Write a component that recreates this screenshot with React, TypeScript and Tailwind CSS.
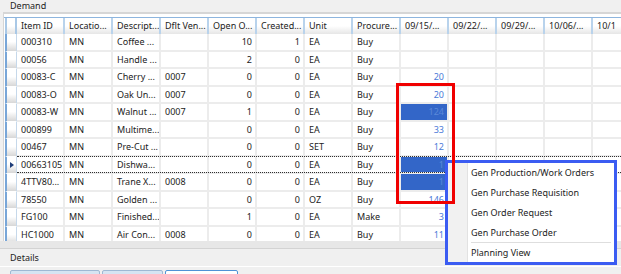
const columns = [
  "Item ID",
  "Locatio...",
  "Descript...",
  "Dflt Ven...",
  "Open O...",
  "Created...",
  "Unit",
  "Procure...",
  "09/15/...",
  "09/22/...",
  "09/29/...",
  "10/06/...",
  "10/1",
];

type Row = {
  id: string;
  desc: string;
  vendor: string;
  open: string;
  created: string;
  unit: string;
  proc: string;
  wk1: string;
  picked?: boolean;
  current?: boolean;
};

const rows: Row[] = [
  { id: "000310", desc: "Coffee ...", vendor: "", open: "10", created: "1", unit: "EA", proc: "Buy", wk1: "" },
  { id: "00056", desc: "Handle ...", vendor: "", open: "2", created: "0", unit: "EA", proc: "Buy", wk1: "" },
  { id: "00083-C", desc: "Cherry ...", vendor: "0007", open: "0", created: "0", unit: "EA", proc: "Buy", wk1: "20" },
  { id: "00083-O", desc: "Oak Un...", vendor: "0007", open: "0", created: "0", unit: "EA", proc: "Buy", wk1: "20" },
  { id: "00083-W", desc: "Walnut ...", vendor: "0007", open: "1", created: "0", unit: "EA", proc: "Buy", wk1: "124", picked: true },
  { id: "000899", desc: "Multime...", vendor: "", open: "0", created: "0", unit: "EA", proc: "Buy", wk1: "33" },
  { id: "00467", desc: "Pre-Cut ...", vendor: "", open: "0", created: "0", unit: "SET", proc: "Buy", wk1: "12" },
  { id: "00663105", desc: "Dishwa...", vendor: "", open: "0", created: "0", unit: "EA", proc: "Buy", wk1: "1", picked: true, current: true },
  { id: "4TTV80...", desc: "Trane X...", vendor: "0008", open: "0", created: "0", unit: "EA", proc: "Buy", wk1: "1", picked: true },
  { id: "78550", desc: "Golden ...", vendor: "", open: "0", created: "0", unit: "OZ", proc: "Buy", wk1: "146" },
  { id: "FG100", desc: "Finished...", vendor: "", open: "1", created: "0", unit: "EA", proc: "Make", wk1: "3" },
  { id: "HC1000", desc: "Air Con...", vendor: "0008", open: "0", created: "0", unit: "EA", proc: "Buy", wk1: "11" },
];

const menuItems = [
  "Gen Production/Work Orders",
  "Gen Purchase Requisition",
  "Gen Order Request",
  "Gen Purchase Order",
];

const Cell = ({ children, right }: { children?: React.ReactNode; right?: boolean }) => (
  <div
    className={
      "w-[48px] shrink-0 h-full flex items-center px-[4px] border-r-2 border-b-2 border-[#ececec] whitespace-nowrap overflow-hidden " +
      (right ? "justify-end pr-[3px]" : "")
    }
  >
    {children}
  </div>
);

const RowHead = ({ current }: { current?: boolean }) => (
  <div className="w-[12px] ml-[1px] shrink-0 h-full flex items-center border-l-2 border-[#78a6d8] border-r border-b border-r-[#c6d8ea] border-b-white bg-linear-to-b from-white from-45% to-[#d7d7d7]">
    {current && (
      <span className="ml-[3px] w-0 h-0 border-l-[4px] border-l-[#1d3c78] border-y-[3px] border-y-transparent" />
    )}
  </div>
);

export default function App() {
  return (
    <div className="relative w-[621px] h-[274px] overflow-hidden bg-[#f0f0f0] text-[9px] text-[#222] font-['Noto_Sans',sans-serif]">
      <div className="h-[12px] pl-[10px] leading-[12px]">Demand</div>

      <div className="h-[229px] ml-[3px] border-t-2 border-l border-[#d6d6d6] bg-white pt-[3px] overflow-hidden">
        {/* column headers */}
        <div className="flex h-[17px] w-max border-t border-[#8db5de]">
          <div className="w-[12px] ml-[1px] shrink-0 h-full border-l-2 border-r-2 border-[#a9c8e6] bg-linear-to-b from-white from-50% to-[#e2e2e2]" />
          {columns.map((c) => (
            <div
              key={c}
              className="w-[48px] shrink-0 h-full flex items-center px-[4px] border-r-2 border-[#b9d3ec] bg-linear-to-b from-white from-50% to-[#e6e6e6] whitespace-nowrap overflow-hidden"
            >
              {c}
            </div>
          ))}
        </div>

        {/* rows */}
        {rows.map((r) => (
          <div key={r.id} className="relative flex h-[17.55px] w-max">
            <RowHead current={r.current} />
            <Cell>{r.id}</Cell>
            <Cell>MN</Cell>
            <Cell>{r.desc}</Cell>
            <Cell>{r.vendor}</Cell>
            <Cell right>{r.open}</Cell>
            <Cell right>{r.created}</Cell>
            <Cell>{r.unit}</Cell>
            <Cell>{r.proc}</Cell>
            <div className="w-[48px] shrink-0 h-full border-r-2 border-b-2 border-[#ececec]">
              <div
                className={
                  "h-full flex items-center justify-end pr-[3px] " +
                  (r.picked ? "bg-[#3366c8] text-[#5b89d9]" : "text-[#4a7ad8]")
                }
              >
                {r.wk1}
              </div>
            </div>
            <Cell />
            <Cell />
            <Cell />
            <Cell />
            {r.current && (
              <span className="pointer-events-none absolute left-[13px] right-0 top-[-1px] bottom-[1px] border-y border-dotted border-[#303030]" />
            )}
          </div>
        ))}
      </div>

      <div className="h-[8px] bg-[#e7e7e7] border-b border-[#d3d3d3]" />
      <div className="h-[17px] pl-[10px] flex items-center">Details</div>
      <div className="h-px bg-white" />
      <div className="flex items-end gap-[2px] pl-[10px] pt-[3px]">
        <div className="w-[90px] h-[6px] border border-[#9fb8d3] rounded-t-[2px] bg-[#d6e4f2]" />
        <div className="w-[61px] h-[6px] border border-[#9fb8d3] rounded-t-[2px] bg-[#d6e4f2]" />
        <div className="w-[73px] h-[6px] border border-[#4f93d6] rounded-t-[2px] bg-white" />
      </div>

      {/* context menu with highlight frame */}
      <div className="absolute left-[445px] top-[160px] w-[172px] h-[105px] border-[3px] border-[#3b5cf2] bg-white flex">
        <div className="w-[20px] shrink-0 bg-[#f1f1f1] border-r border-[#e2e2e2]" />
        <div className="flex-1 flex flex-col pl-[3px] pr-[3px]">
          {menuItems.map((m) => (
            <div key={m} className="h-[20px] flex items-center whitespace-nowrap">
              {m}
            </div>
          ))}
          <div className="h-[2px] border-t border-[#dedede] border-b border-b-white" />
          <div className="h-[18px] flex items-center">Planning View</div>
        </div>
      </div>

      {/* red highlight frame */}
      <div className="pointer-events-none absolute left-[396px] top-[83px] w-[59px] h-[121px] border-[3px] border-[#f00000]" />
    </div>
  );
}
